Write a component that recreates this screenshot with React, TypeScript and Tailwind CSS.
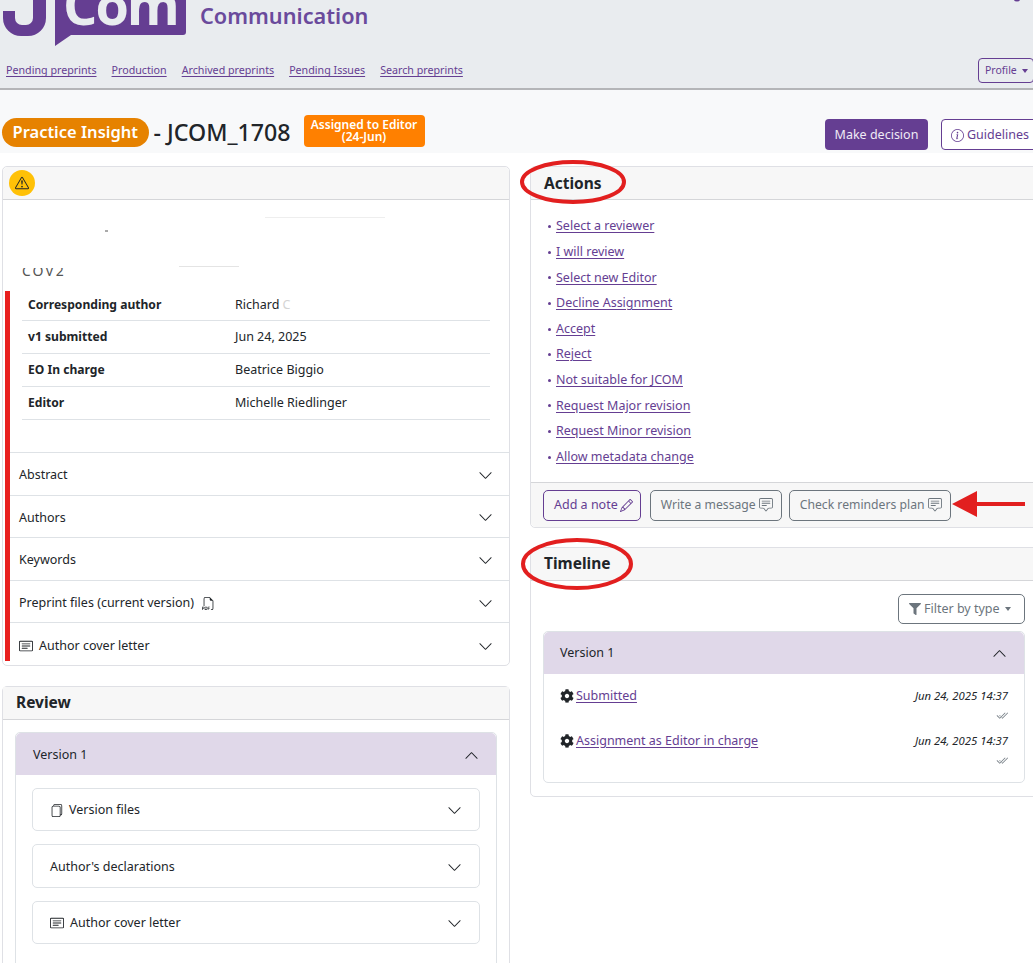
import type { ReactNode } from 'react';
import { BsCardText, BsCheck2All, BsChatSquareText, BsChevronDown, BsChevronUp, BsExclamationTriangle, BsFiles, BsFiletypePdf, BsInfoCircle, BsPencil } from 'react-icons/bs';
import { FaCog, FaFilter } from 'react-icons/fa';

const navLinks = ['Pending preprints', 'Production', 'Archived preprints', 'Pending Issues', 'Search preprints'];

const facts = [
    ['Corresponding author', 'Richard'],
    ['v1 submitted', 'Jun 24, 2025'],
    ['EO In charge', 'Beatrice Biggio'],
    ['Editor', 'Michelle Riedlinger'],
];

const actions = [
    'Select a reviewer',
    'I will review',
    'Select new Editor',
    'Decline Assignment',
    'Accept',
    'Reject',
    'Not suitable for JCOM',
    'Request Major revision',
    'Request Minor revision',
    'Allow metadata change',
];

function Caret() {
    return <span className="inline-block ml-[5px] align-middle border-x-[3.5px] border-t-[4px] border-x-transparent border-t-current" />;
}

function Logo() {
    return (
        <svg width="190" height="47" viewBox="0 0 190 47" className="shrink-0">
            <path d="M33 0h13v18a18 18 0 0 1-18 18H21A18 18 0 0 1 3 18v-7h12v7a7 7 0 0 0 7 7h4a7 7 0 0 0 7-7z" fill="#653e92" />
            <path d="M55 0h131v32a3 3 0 0 1-3 3H71L55 46z" fill="#653e92" />
            <text x="63" y="25" fontFamily="'Open Sans', sans-serif" fontWeight="700" fontSize="54" letterSpacing="-2" fill="#e9ecef">Com</text>
        </svg>
    );
}

function AccordionRow({ children, last }: { children: ReactNode; last?: boolean }) {
    return (
        <div className={`flex h-[42.6px] items-center justify-between pl-[9px] pr-[16px] pt-[3px] text-[12.5px] ${last ? '-mb-[4.6px]' : 'border-b border-[#dee2e6]'}`}>
            <span className="flex items-center">{children}</span>
            <BsChevronDown size={15} />
        </div>
    );
}

function InnerAccordion({ children, className }: { children: ReactNode; className: string }) {
    return (
        <div className={`flex items-center justify-between rounded-[5px] border border-[#dee2e6] pl-[17px] pr-[17px] text-[12.5px] ${className}`}>
            <span className="flex items-center">{children}</span>
            <BsChevronDown size={15} />
        </div>
    );
}

function CardHeader({ title, className = '' }: { title: string; className?: string }) {
    return (
        <div className={`flex h-[33px] items-center border-b border-[#d5d6d9] bg-[#f7f7f7] pl-[13px] text-[15.5px] font-bold ${className}`}>
            {title}
        </div>
    );
}

function ActionButton({ label, purple }: { label: string; purple?: boolean }) {
    return (
        <button className={`flex h-[31px] items-center rounded-[5px] border bg-transparent pl-[10px] ${purple ? 'mr-[2px] border-[#653e92] pr-[7px] text-[12.5px] text-[#653e92]' : 'border-[#6c757d] pr-[8px] text-[12.2px] text-[#6c757d]'}`}>
            {label}
            {purple ? <BsPencil size={13} className="ml-[2px]" /> : <BsChatSquareText size={14} className="ml-[3px]" />}
        </button>
    );
}

function TimelineEntry({ label, last }: { label: string; last?: boolean }) {
    return (
        <div className={`flex justify-between ${last ? '' : 'mb-[11px]'}`}>
            <div className="flex h-[16px] items-center text-[12.5px]">
                <FaCog size={14} className="mr-[2px] text-[#212529]" />
                <a className="text-[#653e92] underline underline-offset-2">{label}</a>
            </div>
            <div className="flex flex-col items-end">
                <span className="h-[16px] text-[11.3px] italic leading-[16px]">Jun 24, 2025 14:37</span>
                <BsCheck2All size={12} className="mt-[6px] text-[#6c757d]" />
            </div>
        </div>
    );
}

export default function App() {
    return (
        <div className="relative h-[963px] w-[1033px] overflow-hidden bg-white text-[#212529] font-['Noto_Sans','Open_Sans',sans-serif]">
            <header className="h-[90px] border-b-2 border-[#b4b5b8] bg-[#e9ecef]">
                <div className="flex h-[47px] items-start">
                    <Logo />
                    <span className="ml-[10px] mt-[3px] text-[21.7px] font-semibold leading-[26px] text-[#6a4a9c]">Communication</span>
                </div>
                <div className="mt-[11px] flex items-center justify-between pl-[6px]">
                    <nav className="flex gap-[15px] text-[10.7px]">
                        {navLinks.map(link => (
                            <a key={link} className="text-[#653e92] underline underline-offset-2">{link}</a>
                        ))}
                    </nav>
                    <button className="mr-[-1px] flex h-[25px] w-[56px] items-center rounded-[4px] border border-[#653e92] pl-[6px] text-[10.5px] text-[#653e92]">
                        Profile<Caret />
                    </button>
                </div>
            </header>

            <section className="flex h-[63px] w-[1040px] items-start justify-between bg-[#f8f9fa] pl-[2px]">
                <div className="mt-[25px] flex items-start">
                    <span className="mt-[3px] flex h-[29px] items-center rounded-full bg-[#e68200] px-[10.5px] text-[16.5px] font-semibold text-white">Practice Insight</span>
                    <span className="ml-[5px] mt-[1px] text-[23.2px] font-medium leading-[32px]">- JCOM_1708</span>
                    <span className="ml-[13px] flex h-[32px] w-[121px] flex-col items-center justify-center rounded-[4px] bg-[#ff8000] text-[12px] font-semibold leading-[12px] text-white">
                        <span>Assigned to Editor</span>
                        <span>(24-Jun)</span>
                    </span>
                </div>
                <div className="mt-[29px] flex gap-[13px]">
                    <button className="flex h-[31px] w-[103px] items-center justify-center rounded-[4px] bg-[#653e92] pt-[1px] text-[12.5px] text-[#f0eaf6]">Make decision</button>
                    <button className="flex h-[31px] w-[99px] items-center rounded-[4px] border border-[#653e92] bg-white pl-[9px] pt-[1px] text-[12.5px] text-[#653e92]">
                        <BsInfoCircle size={13} className="mr-[3px]" />Guidelines
                    </button>
                </div>
            </section>

            <main className="mt-[13px] grid w-[1040px] grid-cols-[508px_508px] gap-[20px] pl-[2px]">
                <div>
                    <section className="h-[500px] rounded-[5px] border border-[#dfe0e5]">
                        <div className="flex h-[33px] items-center rounded-t-[5px] border-b border-[#d5d6d9] bg-[#f7f7f7] pl-[6px]">
                            <span className="flex h-[26px] w-[26px] items-center justify-center rounded-full bg-[#ffc107]">
                                <BsExclamationTriangle size={14} />
                            </span>
                        </div>
                        {/* redacted title */}
                        <div className="relative h-[91px]">
                            <div className="absolute left-[19px] top-[68px] h-[9px] w-[60px] overflow-hidden text-[14px] leading-[6px] tracking-[2px] text-[#555]">COV2</div>
                            <div className="absolute left-[102px] top-[30px] h-[2px] w-[3px] bg-[#aaa]" />
                            <div className="absolute left-[176px] top-[66px] h-[1px] w-[60px] bg-[#e4e4e4]" />
                            <div className="absolute left-[262px] top-[17px] h-[1px] w-[120px] bg-[#eee]" />
                        </div>
                        <div className="ml-[2px] flow-root border-l-[5px] border-[#e8201f]">
                            <div className="ml-[12px] mr-[19px] pb-[32px]">
                                {facts.map(([label, value], i) => (
                                    <div key={label} className={`flex items-center border-b border-[#dee2e6] pl-[6px] text-[12.5px] ${i === 0 ? 'h-[30px]' : 'h-[33px] pt-[1px]'}`}>
                                        <span className="w-[207px] text-[12.1px] font-bold">{label}</span>
                                        <span>{value}{i === 0 && <span className="text-[#d4d4d4]"> C</span>}</span>
                                    </div>
                                ))}
                            </div>
                            <div className="border-t border-[#dee2e6]">
                                <AccordionRow>Abstract</AccordionRow>
                                <AccordionRow>Authors</AccordionRow>
                                <AccordionRow>Keywords</AccordionRow>
                                <AccordionRow>Preprint files (current version)<BsFiletypePdf size={13} className="ml-[8px]" /></AccordionRow>
                                <AccordionRow last><BsCardText size={14} className="mr-[6px]" />Author cover letter</AccordionRow>
                            </div>
                        </div>
                    </section>

                    <section className="mt-[20px] rounded-[5px] border border-[#dfe0e5]">
                        <CardHeader title="Review" />
                        <div className="px-[12px] pt-[12px]">
                            <div className="rounded-[5px] border border-[#dee2e6]">
                                <div className="flex h-[42px] items-center justify-between rounded-t-[5px] bg-[#e0d8e9] pl-[17px] pr-[17px] pt-[3px] text-[12.5px]">
                                    Version 1
                                    <BsChevronUp size={15} />
                                </div>
                                <div className="px-[16px] pb-[40px] pt-[13px]">
                                    <InnerAccordion className="h-[43px] pt-[1px]"><BsFiles size={13} className="mr-[6px]" />Version files</InnerAccordion>
                                    <InnerAccordion className="mt-[13px] h-[44px] pt-[2px]">Author's declarations</InnerAccordion>
                                    <InnerAccordion className="mt-[13px] h-[43px] pt-[1px]"><BsCardText size={14} className="mr-[6px]" />Author cover letter</InnerAccordion>
                                </div>
                            </div>
                        </div>
                    </section>
                </div>

                <div>
                    <section className="rounded-[5px] border border-[#dfe0e5]">
                        <CardHeader title="Actions" className="pt-[1px]" />
                        <ul className="h-[282px] pl-[17px] pt-[14px] text-[12.5px]">
                            {actions.map(action => (
                                <li key={action} className="flex h-[25.6px] items-center">
                                    <span className="mr-[5px] h-[3px] w-[3px] rounded-full bg-[#653e92]" />
                                    <a className="text-[#653e92] underline underline-offset-2">{action}</a>
                                </li>
                            ))}
                        </ul>
                        <div className="flex h-[45px] items-center gap-[7px] rounded-b-[5px] border-t border-[#d5d6d9] bg-[#f7f7f7] pl-[12px]">
                            <ActionButton label="Add a note" purple />
                            <ActionButton label="Write a message" />
                            <ActionButton label="Check reminders plan" />
                        </div>
                    </section>

                    <section className="mt-[19px] rounded-[5px] border border-[#dfe0e5]">
                        <CardHeader title="Timeline" />
                        <div className="px-[12px] pb-[13px] pt-[13px]">
                            <div className="flex justify-end">
                                <button className="flex h-[30px] w-[127px] items-center rounded-[5px] border border-[#6c757d] pl-[10px] text-[12.5px] text-[#6c757d]">
                                    <FaFilter size={12} className="mr-[3px]" />Filter by type<Caret />
                                </button>
                            </div>
                            <div className="mt-[7px] rounded-[5px] border border-[#dee2e6]">
                                <div className="flex h-[42px] items-center justify-between rounded-t-[5px] bg-[#e0d8e9] pl-[16px] pr-[17px] text-[12.5px]">
                                    Version 1
                                    <BsChevronUp size={15} />
                                </div>
                                <div className="px-[16px] pb-[15px] pt-[14px]">
                                    <TimelineEntry label="Submitted" />
                                    <TimelineEntry label="Assignment as Editor in charge" last />
                                </div>
                            </div>
                        </div>
                    </section>
                </div>
            </main>

            {/* hand-drawn annotations on top of the page */}
            <svg width="1033" height="963" className="pointer-events-none absolute left-0 top-0">
                <ellipse cx="573" cy="182" rx="51" ry="20" fill="none" stroke="#e21f1f" strokeWidth="4" />
                <ellipse cx="577" cy="564" rx="54" ry="24" fill="none" stroke="#e21f1f" strokeWidth="4" />
                <path d="M1025 502v4h-48v11l-25-13 25-13v11z" fill="#e21f1f" />
                <circle cx="1017" cy="-2" r="3.5" fill="#653e92" />
            </svg>
        </div>
    );
}
